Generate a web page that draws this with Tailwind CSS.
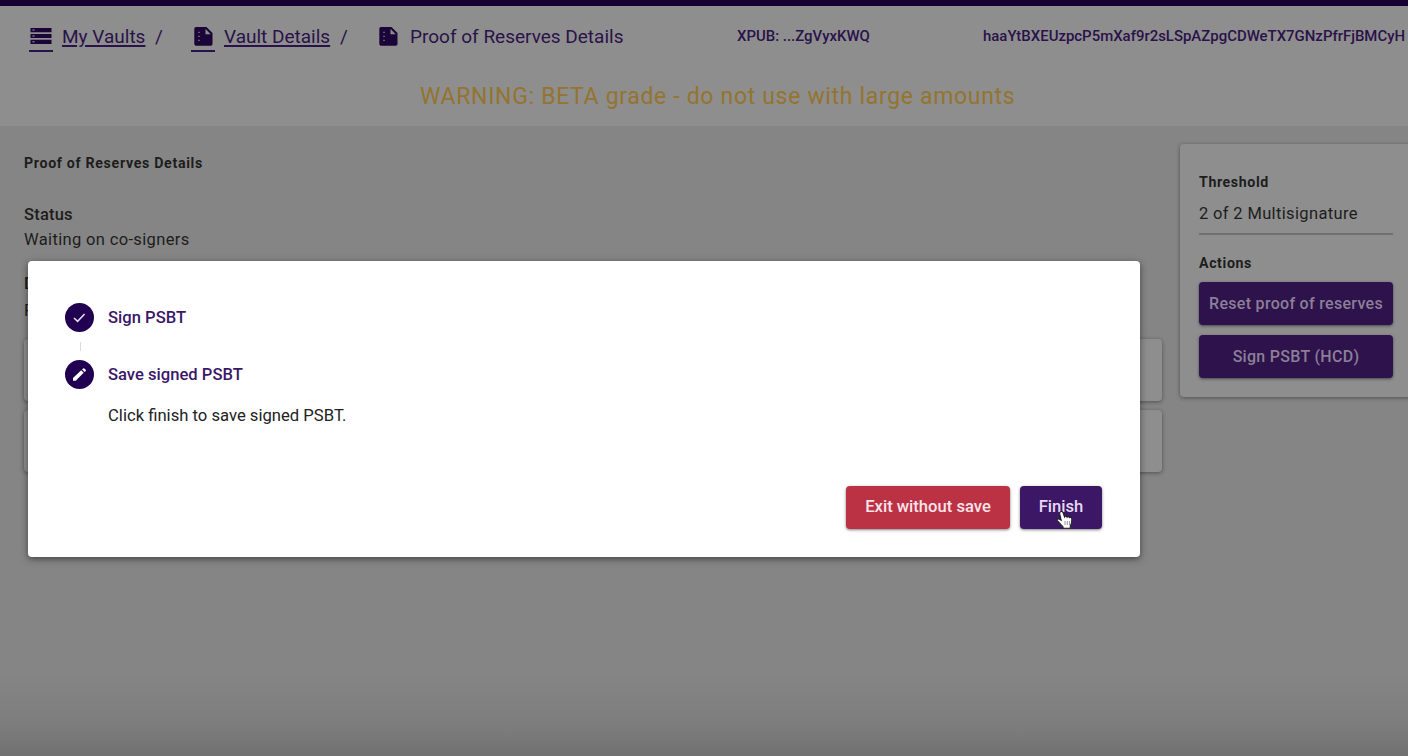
<!DOCTYPE html>
<html lang="en">
<head>
<meta charset="utf-8">
<title>Proof of Reserves Details</title>
<script src="https://cdn.jsdelivr.net/npm/@tailwindcss/browser@4"></script>
</head>
<body class="h-[756px] w-[1408px] overflow-hidden bg-[#858585] font-['Roboto',sans-serif] text-[#1d1d1d]">
<div class="relative flex h-[756px] w-[1408px] flex-col overflow-hidden bg-linear-to-b from-[#858585] from-[89%] via-[#7d7d7d] via-[96%] to-[#707070]">
  <header class="flex h-[126px] shrink-0 flex-col border-t-[6px] border-[#160033] bg-[#8e8e8e] text-[#2a124a]">
    <nav class="flex h-[61px] shrink-0 items-center whitespace-nowrap pl-[29px] text-[19px]">
      <div class="flex w-[162px] items-center">
        <span class="mt-[5px] flex h-[25px] w-6 shrink-0 flex-col items-center border-b-2 border-[#2a124a]">
          <svg class="h-[18px] w-[22px]" viewBox="0 0 22 18"><path fill="#1b0538" d="M.5 1h21v4.200H.5zM.5 6.900h21v4.200H.5zM.5 12.800h21V17H.5z"/><path fill="#77717f" d="M2.500 2.300h2v1.500h-2zM2.500 8.200h2v1.500h-2zM2.500 14.100h2v1.500h-2z"/></svg>
        </span>
        <a class="mt-[2px] ml-[9px] w-[84px] underline decoration-[1.5px] underline-offset-2">My Vaults</a>
        <span class="mt-[2px] ml-[9px]">/</span>
      </div>
      <div class="flex w-[188px] items-center">
        <span class="mt-[5px] flex h-[25px] w-6 shrink-0 flex-col items-center border-b-2 border-[#2a124a]">
          <svg class="h-[19px] w-[19px]" viewBox="0 0 19 19"><path fill="#1b0538" d="M2 0h10.500L18.500 6v11a1.700 1.700 0 0 1-1.700 1.700H2A1.700 1.700 0 0 1 .3 17V1.700A1.700 1.700 0 0 1 2 0z"/><path fill="#8e8e8e" d="M11.500 2v5.200h5.200z"/><path fill="#77717f" d="M4.200 4.700h1.600v1.400H4.200zM4.200 8.700h1.600v1.400H4.200zM4.200 12.700h1.600v1.400H4.200z"/></svg>
        </span>
        <a class="mt-[2px] ml-[9px] w-[107px] underline decoration-[1.5px] underline-offset-2">Vault Details</a>
        <span class="mt-[2px] ml-[9px]">/</span>
      </div>
      <div class="flex w-[358px] items-center">
        <svg class="h-[19px] w-[19px]" viewBox="0 0 19 19"><path fill="#1b0538" d="M2 0h10.500L18.500 6v11a1.700 1.700 0 0 1-1.700 1.700H2A1.700 1.700 0 0 1 .3 17V1.700A1.700 1.700 0 0 1 2 0z"/><path fill="#8e8e8e" d="M11.500 2v5.200h5.200z"/><path fill="#77717f" d="M4.200 4.700h1.600v1.400H4.200zM4.200 8.700h1.600v1.400H4.200zM4.200 12.700h1.600v1.400H4.200z"/></svg>
        <span class="mt-[2px] ml-[12px]">Proof of Reserves Details</span>
      </div>
      <span class="w-[246px] text-[14.950px] font-medium">XPUB: ...ZgVyxKWQ</span>
      <span class="text-[14.950px] font-medium">haaYtBXEUzpcP5mXaf9r2sLSpAZpgCDWeTX7GNzPfrFjBMCyH</span>
    </nav>
    <p class="mt-[10px] whitespace-nowrap pl-[420px] text-[23px] leading-10 tracking-[0.670px] text-[#94742f]">WARNING: BETA grade - do not use with large amounts</p>
  </header>

  <div class="flex flex-1">
    <main class="flex w-[1162px] shrink-0 flex-col pl-6">
      <h1 class="mt-[27px] text-[14.200px] leading-5 font-bold tracking-[0.680px]">Proof of Reserves Details</h1>
      <h2 class="mt-[30px] text-[16.500px] leading-6 font-medium tracking-[0.200px]">Status</h2>
      <p class="mt-px text-[16.500px] leading-6 tracking-[0.350px]">Waiting on co-signers</p>
      <h2 class="mt-5 text-[16.500px] leading-6 font-medium">D</h2>
      <p class="mt-[3px] text-[16.500px] leading-6">P</p>
      <div class="mt-[16px] h-[62px] rounded bg-[#8e8e8e] shadow-[0_1px_4px_rgba(0,0,0,0.4)]"></div>
      <div class="mt-[9px] h-[62px] rounded bg-[#8e8e8e] shadow-[0_1px_4px_rgba(0,0,0,0.4)]"></div>
    </main>
    <aside class="mt-[18px] ml-[18px] flex h-[253px] w-[240px] shrink-0 flex-col rounded bg-[#8e8e8e] pr-[27px] pl-[19px] shadow-[0_1px_4px_rgba(0,0,0,0.4)]">
      <h2 class="mt-[28px] text-[14.200px] leading-5 font-bold tracking-[0.600px]">Threshold</h2>
      <p class="mt-[10px] h-[33px] border-b-2 border-[#707070] text-[16.500px] leading-6 tracking-[0.350px]">2 of 2 Multisignature</p>
      <h2 class="mt-[18px] text-[14.200px] leading-5 font-bold tracking-[0.600px]">Actions</h2>
      <button class="mt-[9px] h-[43px] rounded bg-[#2d124b] text-base font-medium tracking-[0.300px] whitespace-nowrap text-[#8c7f98] shadow-[0_1px_3px_rgba(0,0,0,0.5)]">Reset proof of reserves</button>
      <button class="mt-[10px] h-[43px] rounded bg-[#2d124b] text-base font-medium tracking-[0.300px] whitespace-nowrap text-[#8c7f98] shadow-[0_1px_3px_rgba(0,0,0,0.5)]">Sign PSBT (HCD)</button>
    </aside>
  </div>

  <section role="dialog" class="absolute top-[261px] left-[28px] flex h-[296px] w-[1112px] flex-col rounded bg-white pr-[38px] pl-[37px] shadow-[0_2px_7px_rgba(0,0,0,0.5)]">
    <div class="mt-[42px] flex h-[29px] items-center gap-[14px]">
      <svg class="size-[29px]" viewBox="0 0 29 29"><circle cx="14.500" cy="14.500" r="14.500" fill="#210052"/><path d="M9 15l3.600 3.300 7-7.300" fill="none" stroke="#e6ddf0" stroke-width="1.600"/></svg>
      <span class="mt-[2px] text-[16.600px] font-medium text-[#3b1768]">Sign PSBT</span>
    </div>
    <div class="mt-[10px] ml-[15px] h-[9px] w-px bg-[#dcdcdc]"></div>
    <div class="mt-[9px] flex h-[29px] items-center gap-[14px]">
      <svg class="size-[29px]" viewBox="0 0 29 29"><circle cx="14.500" cy="14.500" r="14.500" fill="#210052"/><path d="M8 20.800v-2.700l8.200-7.900 2.500 2.500-8 8.100zM17.100 9.400l1-.9q.7-.5 1.300 0l1.300 1.300q.5.700 0 1.300l-1 1z" fill="#fff"/></svg>
      <span class="mt-[2px] text-[16.600px] font-medium text-[#3b1768]">Save signed PSBT</span>
    </div>
    <p class="mt-[15px] ml-[43px] text-[16.650px] leading-6 text-[#222]">Click finish to save signed PSBT.</p>
    <div class="mt-[58px] flex justify-end gap-[10px]">
      <button class="h-[43px] w-[164px] rounded bg-[#bb3245] text-[16.600px] font-medium whitespace-nowrap text-[#fbe4ea] shadow-[0_1px_3px_rgba(0,0,0,0.5)]">Exit without save</button>
      <button class="h-[43px] w-[82px] rounded bg-[#3c1766] text-[16.600px] font-medium text-[#e6d9f2] shadow-[0_1px_3px_rgba(0,0,0,0.5)]">Finish</button>
    </div>
    <svg class="absolute top-[249px] left-[1028px] h-[20px] w-[18px]" viewBox="0 0 18 20"><path d="M5 1.500c1.300-.4 1.900.5 2.200 1.500l1.300 4c.4-1 2.200-.9 2.600.2.600-.9 2.200-.7 2.500.4 1-.6 2.200.1 2.200 1.300.2 3-.2 5-1.500 6.800v2.500H7.200l-.4-1.800C4.600 14.500 3.700 12.800 1.500 11c-1-1-.1-2.400 1.500-1.900l2.200 1.200-1.500-6.500C3.500 2.700 4 1.800 5 1.500z" fill="#fff" stroke="#222" stroke-width="1.100"/><path d="M9 11v4M11.300 11v4M13.600 11v4" stroke="#888" stroke-width=".9"/></svg>
  </section>
</div>
</body>
</html>
